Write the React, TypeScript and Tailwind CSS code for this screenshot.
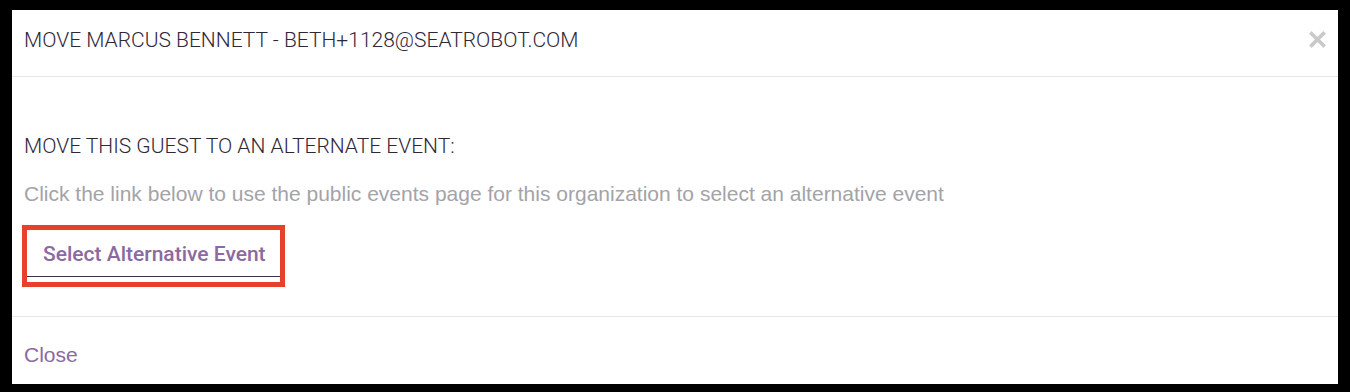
export default function App() {
  return (
    <div className="h-[392px] w-[1350px] bg-black pt-[10px] pl-[12px] pr-[12px] pb-[8px]">
      <div className="flex h-full flex-col bg-white">
        <div className="flex h-[67px] items-start justify-between border-b border-[#e6e6e6] pl-[12px] pr-[12px] pt-[18px]">
          <h4 className="font-['Roboto',sans-serif] text-[21px] font-light uppercase leading-[24px] text-[#2f2638]">
            MOVE MARCUS BENNETT - BETH+1128@SEATROBOT.COM
          </h4>
          <button className="mt-[3px] flex h-[17px] w-[17px] items-center justify-center">
            <svg viewBox="0 0 16 16" className="h-[17px] w-[17px]" fill="none">
              <path d="M2.5 2.5 L13.5 13.5 M13.5 2.5 L2.5 13.5" stroke="#c9c9c9" strokeWidth="3.4" strokeLinecap="square" />
            </svg>
          </button>
        </div>
        <div className="flex-1 border-b border-[#e6e6e6] pl-[12px] pt-[57px]">
          <p className="font-['Roboto',sans-serif] text-[21px] font-light uppercase leading-[24px] text-[#2f2638]">
            MOVE THIS GUEST TO AN ALTERNATE EVENT:
          </p>
          <p className="mt-[24px] font-['Liberation_Sans',Arial,sans-serif] text-[21px] leading-[24px] text-[#a3a3a8]">
            Click the link below to use the public events page for this organization to select an alternative event
          </p>
          <div className="mt-[19px] ml-[-2px] flex w-[263px] border-[5px] border-[#e8412b] pb-[5px]">
            <button className="flex h-[47px] w-[253px] items-start border-b border-[#3b3046] pl-[16px] pt-[12px] text-left font-['Roboto',sans-serif] text-[21px] font-medium leading-[24px] text-[#8a6aa0]">
              Select Alternative Event
            </button>
          </div>
        </div>
        <div className="h-[67px] pl-[12px] pt-[26px]">
          <a className="font-['Liberation_Sans',Arial,sans-serif] text-[21px] leading-[24px] text-[#8b6aa2]">Close</a>
        </div>
      </div>
    </div>
  );
}
